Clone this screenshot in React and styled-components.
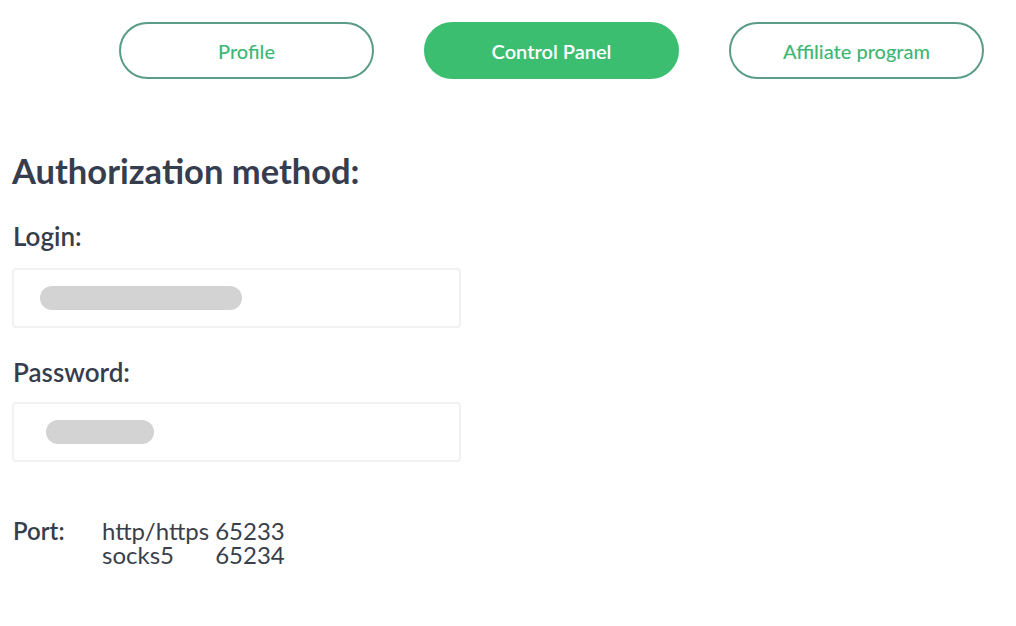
import React from "react";
import styled, { createGlobalStyle } from "styled-components";

const GlobalStyle = createGlobalStyle`
  body {
    margin: 0;
    background: #fff;
    font-family: Lato, "Noto Sans", sans-serif;
    color: #363d4c;
  }
`;

const Page = styled.div`
  width: 1016px;
  height: 626px;
  overflow: hidden;
`;

const Tabs = styled.nav`
  display: flex;
  justify-content: flex-end;
  gap: 50px;
  padding: 22px 32px 0 0;
`;

const Tab = styled.button`
  width: 255px;
  height: 57px;
  border-radius: 29px;
  border: 2px solid ${(p) => (p.active ? "#3cbe71" : "#5a9c84")};
  background: ${(p) => (p.active ? "#3cbe71" : "#fff")};
  color: ${(p) => (p.active ? "#fff" : "#3fb776")};
  font-family: Lato, sans-serif;
  font-size: 20px;
  font-weight: ${(p) => (p.active ? 600 : 500)};
  cursor: pointer;
`;

const Content = styled.section`
  padding: 0 12px;
`;

const Title = styled.h2`
  margin: 72px 0 0;
  font-size: 34.5px;
  font-weight: 700;
  line-height: 40px;
  color: #363d4f;
`;

const Label = styled.div`
  margin-top: ${(p) => p.top}px;
  padding-left: 1px;
  font-size: 26px;
  font-weight: 600;
  line-height: 30px;
  color: #363d4c;
`;

const Field = styled.div`
  margin-top: ${(p) => p.top}px;
  width: 449px;
  height: 60px;
  box-sizing: border-box;
  border: 2px solid #f1f1f1;
  border-radius: 4px;
  display: flex;
  align-items: center;
  padding-left: ${(p) => p.inset}px;
`;

const Redacted = styled.span`
  display: block;
  width: ${(p) => p.w}px;
  height: 24px;
  border-radius: 12px;
  background: #d3d3d3;
`;

const Port = styled.div`
  margin-top: 57px;
  display: grid;
  grid-template-columns: 84px auto auto;
  column-gap: 6px;
  justify-content: start;
  font-size: 24px;
  line-height: 24px;
  color: #3a3f4b;
`;

const PortLabel = styled.span`
  grid-row: span 2;
  padding-left: 1px;
  font-weight: 600;
  color: #363d4c;
`;

export default function App() {
  return (
    <Page>
      <GlobalStyle />
      <Tabs>
        <Tab>Profile</Tab>
        <Tab active>Control Panel</Tab>
        <Tab>Affiliate program</Tab>
      </Tabs>
      <Content>
        <Title>Authorization method:</Title>
        <Label top={30}>Login:</Label>
        <Field top={17} inset={26}>
          <Redacted w={202} />
        </Field>
        <Label top={29}>Password:</Label>
        <Field top={15} inset={32}>
          <Redacted w={108} />
        </Field>
        <Port>
          <PortLabel>Port:</PortLabel>
          <span>http/https</span>
          <span>65233</span>
          <span>socks5</span>
          <span>65234</span>
        </Port>
      </Content>
    </Page>
  );
}
